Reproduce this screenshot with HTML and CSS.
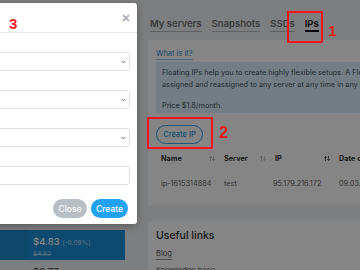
FILE: index.html
```html
<!DOCTYPE html>
<html>
  <head>
    <meta charset="UTF-8" />
    <title>Floating IPs</title>
    <link rel="stylesheet" href="styles.css">
  </head>
  <body>
    <div class="layout">
      <aside class="market">
        <div class="market-chart"></div>
        <div class="price-row active">
          <div class="price-flag"></div>
          <div class="price-cell">
            <div class="price">$4.83 <span class="change">(-0.09%)</span></div>
            <div class="old-price">$4.83</div>
          </div>
        </div>
        <div class="price-row">
          <div class="price-flag"></div>
          <div class="price-cell">
            <div class="price">$6.77 <span class="change">(-0.09%)</span></div>
            <div class="old-price">$6.77</div>
          </div>
        </div>
      </aside>

      <main class="main">
        <nav class="tabs">
          <a class="tab" href="#">My servers</a>
          <a class="tab" href="#">Snapshots</a>
          <a class="tab" href="#">SSDs</a>
          <a class="tab active" href="#">IPs</a>
        </nav>

        <section class="card">
          <a class="help-link" href="#">What is it?</a>
          <div class="info">
            <p>Floating IPs help you to create highly flexible setups. A Floating IP can be<br>assigned and reassigned to any server at any time in any location.</p>
            <p>Price $1.8/month.</p>
          </div>
          <button class="btn-outline">Create IP</button>

          <table class="ip-table">
            <colgroup>
              <col style="width: 63px">
              <col style="width: 51px">
              <col style="width: 64px">
              <col style="width: 80px">
            </colgroup>
            <thead>
              <tr>
                <th>Name <svg class="sort" viewBox="0 0 6 5"><path d="M1.5 5V0.6M0.2 1.8L1.5 0.5L2.8 1.8M4.5 0V4.4M3.2 3.2L4.5 4.5L5.8 3.2"/></svg></th>
                <th>Server <svg class="sort" viewBox="0 0 6 5"><path d="M1.5 5V0.6M0.2 1.8L1.5 0.5L2.8 1.8M4.5 0V4.4M3.2 3.2L4.5 4.5L5.8 3.2"/></svg></th>
                <th>IP <svg class="sort active" viewBox="0 0 6 5"><path d="M1.5 5V0.6M0.2 1.8L1.5 0.5L2.8 1.8M4.5 0V4.4M3.2 3.2L4.5 4.5L5.8 3.2"/></svg></th>
                <th>Date of creation</th>
              </tr>
            </thead>
            <tbody>
              <tr>
                <td>ip-1615314884</td>
                <td>test</td>
                <td class="ip">95.179.216.172</td>
                <td>09.03.2021</td>
              </tr>
            </tbody>
          </table>
        </section>

        <section class="card links">
          <h3>Useful links</h3>
          <a href="#">Blog</a>
          <a href="#">Knowledge base</a>
        </section>
      </main>
    </div>

    <div class="backdrop"></div>

    <div class="modal">
      <div class="modal-header">
        <svg class="close-x" viewBox="0 0 8 8"><path d="M1 1L7 7M7 1L1 7"/></svg>
      </div>
      <div class="modal-body">
        <div class="field"><svg class="chevron" viewBox="0 0 6 4"><path d="M1 1L3 3L5 1"/></svg></div>
        <div class="field"><svg class="chevron" viewBox="0 0 6 4"><path d="M1 1L3 3L5 1"/></svg></div>
        <div class="field"><svg class="chevron" viewBox="0 0 6 4"><path d="M1 1L3 3L5 1"/></svg></div>
        <div class="field"></div>
      </div>
      <div class="modal-footer">
        <button class="btn btn-close">Close</button>
        <button class="btn btn-create">Create</button>
      </div>
    </div>

    <!-- annotations -->
    <div class="mark mark-1"></div>
    <div class="mark mark-2"></div>
    <div class="num num-1">1</div>
    <div class="num num-2">2</div>
    <div class="num num-3">3</div>
  </body>
</html>
```

FILE: styles.css
```css
* {
  box-sizing: border-box;
  margin: 0;
  padding: 0;
}

body {
  width: 360px;
  height: 270px;
  overflow: hidden;
  background: #f0f1f3;
  color: #333;
  font-family: Inter, "Open Sans", sans-serif;
}

a {
  text-decoration: none;
}

.layout {
  display: flex;
  gap: 23px;
}

/* left column */
.market {
  width: 125px;
  flex: none;
}

.market-chart {
  height: 230px;
}

.price-row {
  display: flex;
  height: 30px;
}

.price-row.active {
  background: #1c8fd6;
}

.price-flag {
  width: 28px;
}

.price-row.active .price-flag {
  background: #1a88cc;
}

.price-cell {
  padding: 6px 0 0 5px;
}

.price {
  font-size: 9.5px;
  font-weight: 500;
  line-height: 11px;
  color: #555;
}

.price-row.active .price {
  color: #fff;
}

.change {
  font-size: 6.5px;
  color: #999;
}

.price-row.active .change {
  color: #9fd0ef;
}

.old-price {
  font-size: 6.5px;
  line-height: 10px;
  color: #9fd0ef;
  text-decoration: line-through;
}

/* main column */
.main {
  flex: none;
  width: 420px;
  padding-top: 17px;
}

.tabs {
  display: flex;
  gap: 10px;
  padding-left: 2px;
  margin-bottom: 8px;
}

.tab {
  color: #747474;
  font-size: 9.5px;
  font-weight: 600;
  line-height: 13px;
  padding-bottom: 1px;
  border-bottom: 1px solid #b8b8b8;
}

.tab.active {
  color: #000;
  padding-bottom: 0;
  border-bottom: 2px solid #000;
}

.card {
  background: #fff;
  padding: 8px 0 6px 8px;
}

.help-link {
  display: table;
  color: #2f8fd0;
  font-size: 7.5px;
  line-height: 11px;
  border-bottom: 1px solid #9cc8e6;
}

.info {
  margin-top: 2px;
  padding: 4.5px 6px 1px;
  background: #dcf0fb;
  color: #44535e;
  font-size: 7.3px;
  line-height: 12px;
  white-space: nowrap;
}

.info p + p {
  margin-top: 9px;
}

.btn-outline {
  display: block;
  width: 47px;
  height: 19px;
  margin-top: 12px;
  background: #fff;
  color: #2b93dc;
  border: 1px solid #3a9de2;
  border-radius: 10px;
  font-family: Inter, "Open Sans", sans-serif;
  font-size: 7.5px;
  font-weight: 500;
}

.ip-table {
  margin-top: 5px;
  border-collapse: collapse;
  table-layout: fixed;
  font-size: 7.3px;
}

.ip-table th {
  height: 19px;
  padding: 0 4px 0 5px;
  text-align: left;
  color: #333;
  font-weight: 700;
  white-space: nowrap;
}

.ip-table td {
  height: 31px;
  padding-left: 5px;
  color: #666;
  white-space: nowrap;
}

.ip-table td.ip {
  padding-left: 3px;
}

.sort {
  float: right;
  width: 6px;
  height: 5px;
  margin-top: 2px;
  fill: none;
  stroke: #b0b0b0;
  stroke-width: 0.8;
}

.sort.active {
  stroke: #444;
}

.links {
  margin-top: 16px;
}

.links h3 {
  color: #333;
  font-size: 10.5px;
  font-weight: 500;
  line-height: 14px;
}

.links a {
  display: table;
  margin-top: 5px;
  color: #555;
  font-size: 7.5px;
  line-height: 11px;
  border-bottom: 1px solid #999;
}

/* modal */
.backdrop {
  position: fixed;
  inset: 0;
  background: rgba(0, 0, 0, 0.48);
}

.modal {
  position: fixed;
  left: -220px;
  top: 3px;
  width: 357px;
  height: 221px;
  background: #fff;
  border-radius: 3px;
  box-shadow: 0 2px 8px rgba(0, 0, 0, 0.3);
}

.modal-header {
  height: 30px;
  display: flex;
  align-items: center;
  justify-content: flex-end;
  padding-right: 7px;
  border-bottom: 1px solid #e6e8ea;
}

.close-x {
  width: 8px;
  height: 8px;
  stroke: #b3b7bb;
  stroke-width: 2;
}

.modal-body {
  padding: 19px 7px 0 0;
}

.field {
  height: 19px;
  display: flex;
  align-items: center;
  justify-content: flex-end;
  padding-right: 3px;
  margin-bottom: 19px;
  border: 1px solid #dfe2e6;
  border-radius: 3px;
}

.field:last-child {
  margin-bottom: 0;
}

.chevron {
  width: 5px;
  height: 4px;
  fill: none;
  stroke: #555;
  stroke-width: 1.2;
}

.modal-footer {
  display: flex;
  justify-content: flex-end;
  gap: 4px;
  padding: 14px 9px 0 0;
}

.btn {
  height: 19px;
  border: none;
  border-radius: 10px;
  color: #fff;
  font-family: Inter, "Open Sans", sans-serif;
  font-size: 8.5px;
  font-weight: 500;
}

.btn-close {
  width: 34px;
  background: #b7bec4;
}

.btn-create {
  width: 37px;
  background: #1ea2f1;
}

/* red annotations */
.mark {
  position: fixed;
  border: 2px solid #f2151c;
}

.mark-1 {
  left: 287px;
  top: 11px;
  width: 36px;
  height: 32px;
}

.mark-2 {
  left: 147px;
  top: 117px;
  width: 66px;
  height: 32px;
}

.num {
  position: fixed;
  color: #f2151c;
  font-family: "Liberation Sans", sans-serif;
  font-size: 15px;
  font-weight: 700;
  line-height: 15px;
}

.num-1 {
  left: 328px;
  top: 23px;
}

.num-2 {
  left: 219px;
  top: 125px;
  font-size: 16px;
}

.num-3 {
  left: 9px;
  top: 16px;
}
```
